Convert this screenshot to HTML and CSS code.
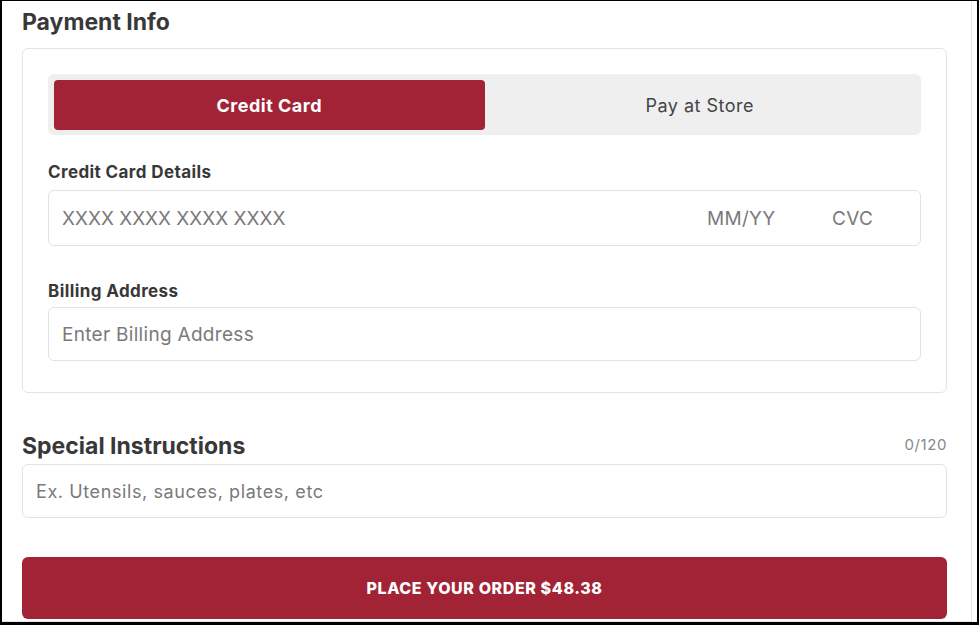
FILE: index.html
```html
<!DOCTYPE html>
<html lang="en">
<head>
    <meta charset="UTF-8">
    <meta name="viewport" content="width=device-width, initial-scale=1.0">
    <title>Checkout - Payment</title>
    <link rel="stylesheet" href="styles.css">
</head>
<body>
    <div class="frame">
        <div class="page">
            <h2 class="section-title">Payment Info</h2>

            <div class="payment-card">
                <div class="pay-toggle">
                    <button class="toggle-btn active">Credit Card</button>
                    <button class="toggle-btn">Pay at Store</button>
                </div>

                <div class="field field-card">
                    <label class="field-label">Credit Card Details</label>
                    <div class="card-input">
                        <input class="card-number" type="text" placeholder="XXXX XXXX XXXX XXXX">
                        <input class="card-exp" type="text" placeholder="MM/YY">
                        <input class="card-cvc" type="text" placeholder="CVC">
                    </div>
                </div>

                <div class="field field-billing">
                    <label class="field-label">Billing Address</label>
                    <input class="text-input billing-input" type="text" placeholder="Enter Billing Address">
                </div>
            </div>

            <div class="instructions-head">
                <h2 class="section-title">Special Instructions</h2>
                <span class="char-count">0/120</span>
            </div>
            <input class="text-input instructions-input" type="text" maxlength="120" placeholder="Ex. Utensils, sauces, plates, etc">

            <button class="order-btn">PLACE YOUR ORDER $48.38</button>
        </div>
    </div>
</body>
</html>
```

FILE: styles.css
```css
body {
    margin: 0;
    font-family: Inter, "Noto Sans", Arial, sans-serif;
    background: #fff;
    color: #383838;
}

.frame {
    width: 979px;
    height: 625px;
    box-sizing: border-box;
    border: 2px solid #000;
    border-top-width: 1px;
    border-bottom-width: 3px;
    overflow: hidden;
    background: #fff;
}

.page {
    height: 100%;
    box-sizing: border-box;
    margin-right: 5px;
    padding: 6px 24px 0 20px;
    border-right: 1px solid #e6e6e6;
    border-bottom: 1px solid #e6e6e6;
}

.section-title {
    margin: 0;
    font-size: 23px;
    line-height: 30px;
    font-weight: 700;
    color: #383838;
}

.payment-card {
    margin-top: 11px;
    border: 1px solid #e4e4e4;
    border-radius: 6px;
    padding: 25px 25px 31px;
}

.pay-toggle {
    display: flex;
    background: #efefef;
    border-radius: 6px;
    padding: 6px 6px 5px;
}

.toggle-btn {
    flex: 1;
    height: 50px;
    border: none;
    border-radius: 4px;
    background: transparent;
    font-family: inherit;
    font-size: 18px;
    letter-spacing: 0.5px;
    color: #454545;
    cursor: pointer;
}

.toggle-btn.active {
    background: #a22335;
    color: #fff;
    font-weight: 700;
}

.field-card {
    margin-top: 27px;
}

.field-billing {
    margin-top: 35px;
}

.field-label {
    display: block;
    font-size: 17px;
    line-height: 20px;
    font-weight: 650;
    letter-spacing: 0.4px;
    color: #383838;
    margin-bottom: 8px;
}

.field-billing .field-label {
    margin-bottom: 6px;
}

.card-input {
    display: flex;
    align-items: center;
    height: 56px;
    box-sizing: border-box;
    border: 1px solid #e2e2e2;
    border-radius: 6px;
    padding: 0 13px;
}

.card-input input,
.text-input {
    border: none;
    outline: none;
    background: transparent;
    font-family: inherit;
    font-size: 19px;
    letter-spacing: 0.3px;
    color: #333;
    padding: 0;
}

.card-input input::placeholder,
.text-input::placeholder {
    color: #7a7a7a;
}

.card-input .card-number {
    flex: 1;
    min-width: 0;
    letter-spacing: 0;
}

.card-exp {
    width: 125px;
}

.card-cvc {
    width: 75px;
}

.text-input {
    display: block;
    width: 100%;
    box-sizing: border-box;
    border: 1px solid #e2e2e2;
    border-radius: 6px;
    padding: 0 13px;
}

.billing-input {
    height: 54px;
}

.instructions-head {
    display: flex;
    justify-content: space-between;
    align-items: center;
    margin-top: 39px;
}

.instructions-head .section-title {
    font-size: 23px;
    line-height: 28px;
}

.char-count {
    font-size: 15px;
    letter-spacing: 0.6px;
    color: #888;
    padding-bottom: 3px;
}

.instructions-input {
    margin-top: 4px;
    height: 54px;
    font-size: 18px;
    letter-spacing: 0.6px;
}

.order-btn {
    display: block;
    width: 100%;
    height: 62px;
    margin-top: 39px;
    border: none;
    border-radius: 6px;
    background: #a22335;
    color: #fff;
    font-family: inherit;
    font-size: 16px;
    font-weight: 800;
    letter-spacing: 0.6px;
    cursor: pointer;
}
```
